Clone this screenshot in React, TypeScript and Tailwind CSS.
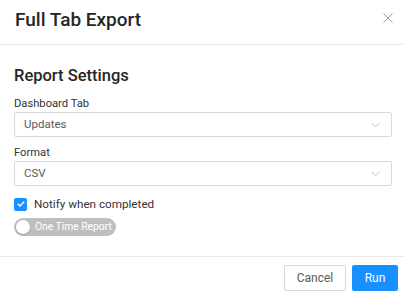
import React from 'react';

function Chevron() {
  return (
    <svg width="9" height="6" viewBox="0 0 9 6" fill="none" className="text-[#bfbfbf]">
      <path d="M0.5 0.8 L4.5 4.8 L8.5 0.8" stroke="currentColor" strokeWidth="1" />
    </svg>
  );
}

function SelectBox({ value }: { value: string }) {
  return (
    <div className="flex h-[25px] w-[378px] items-center justify-between rounded-[2px] border border-[#d9d9d9] bg-white pl-[9px] pr-[11px] text-[11.5px] text-[#595959]">
      <span>{value}</span>
      <Chevron />
    </div>
  );
}

export default function App() {
  return (
    <div
      className="h-[294px] w-[404px] overflow-hidden bg-white text-[#262626]"
      style={{ fontFamily: 'Roboto, "Liberation Sans", Arial, sans-serif' }}
    >
      {/* Header */}
      <div className="flex h-[45px] items-center justify-between border-b border-[#ebebeb] pl-[15px] pr-[11px]">
        <h2 className="mb-[3px] text-[19px] font-medium text-[#262626]">Full Tab Export</h2>
        <svg width="10" height="10" viewBox="0 0 10 10" className="mb-[8px] text-[#999]">
          <path d="M0.5 0.5 L9.5 9.5 M9.5 0.5 L0.5 9.5" stroke="currentColor" strokeWidth="1" />
        </svg>
      </div>

      {/* Body */}
      <div className="flex flex-col px-[14px] pb-[20px] pt-[19px]">
        <h3 className="text-[16.5px] font-medium leading-[24px] text-[#262626]">Report Settings</h3>

        <label className="mt-[8px] text-[11.2px] leading-[16px] text-[#333]">Dashboard Tab</label>
        <SelectBox value="Updates" />

        <label className="mt-[8px] text-[11.2px] leading-[16px] text-[#333]">Format</label>
        <SelectBox value="CSV" />

        <div className="mt-[10px] flex items-center gap-[7px]">
          <div className="flex h-[13px] w-[13px] items-center justify-center rounded-[2px] bg-[#1890ff]">
            <svg width="8" height="6" viewBox="0 0 8 6" fill="none">
              <path d="M0.8 2.8 L3 5 L7.2 0.8" stroke="white" strokeWidth="1.4" />
            </svg>
          </div>
          <span className="text-[11.7px] leading-[16px] text-[#333]">Notify when completed</span>
        </div>

        <div className="mt-[6px] flex h-[18px] w-[102px] items-center gap-[5px] rounded-full bg-[#bfbfbf] pl-[2px]">
          <div className="h-[14px] w-[14px] rounded-full bg-white shadow-[0_1px_2px_rgba(0,0,0,0.2)]" />
          <span className="whitespace-nowrap text-[10.3px] text-white">One Time Report</span>
        </div>
      </div>

      {/* Footer */}
      <div className="flex justify-end gap-[6px] border-t border-[#ebebeb] pr-[6px] pt-[8px]">
        <button className="h-[26px] w-[62px] rounded-[2px] border border-[#d9d9d9] bg-white text-[12px] text-[#595959]">
          Cancel
        </button>
        <button className="h-[26px] w-[46px] rounded-[2px] bg-[#1890ff] text-[12px] text-white">
          Run
        </button>
      </div>
    </div>
  );
}
